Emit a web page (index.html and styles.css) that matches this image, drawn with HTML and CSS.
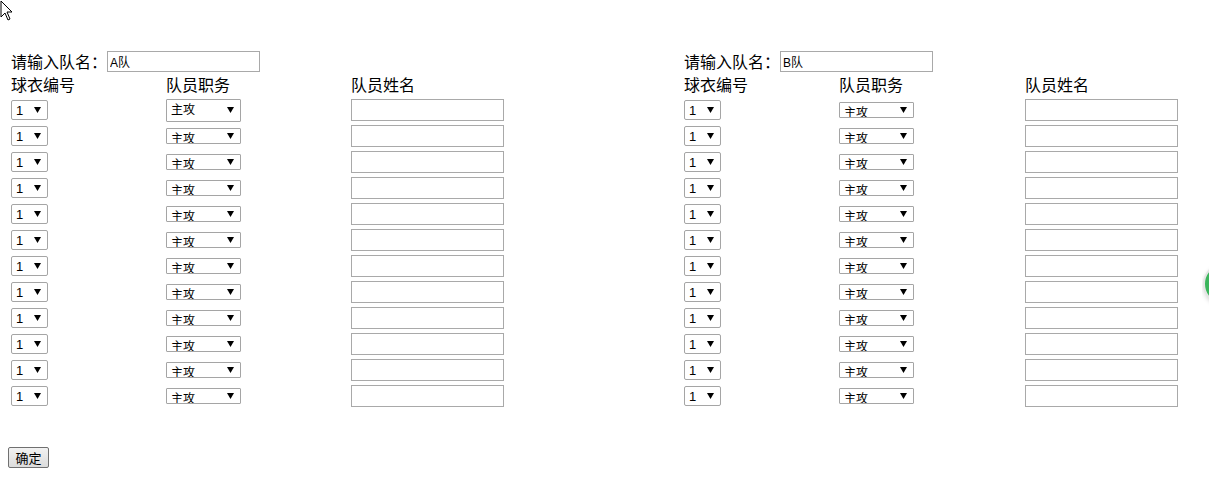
FILE: index.html
```html
<!DOCTYPE html>
<html lang="zh">
<head>
  <meta charset="UTF-8">
  <title>队员登记</title>
  <link rel="stylesheet" href="styles.css">
</head>
<body>
  <svg class="cursor" width="14" height="22" viewBox="0 0 14 22">
    <path d="M1 1 L1 17 L5 13 L8 20 L10 19 L7 12 L12 12 Z" fill="#fff" stroke="#000" stroke-width="1"/>
  </svg>
  <form id="teams">
    <div class="team" data-team="A">
      <div class="teamname">请输入队名：<input type="text" class="tname" value="A队"></div>
      <div class="row head"><span>球衣编号</span><span>队员职务</span><span>队员姓名</span></div>
      <div class="rows"></div>
    </div>
    <div class="team" data-team="B">
      <div class="teamname">请输入队名：<input type="text" class="tname" value="B队"></div>
      <div class="row head"><span>球衣编号</span><span>队员职务</span><span>队员姓名</span></div>
      <div class="rows"></div>
    </div>
  </form>
  <button type="button" class="ok">确定</button>
  <div class="float-ball"><div></div></div>
  <script>
    // 每队12个队员
    document.querySelectorAll(".team .rows").forEach(box => {
      for (let i = 0; i < 12; i++) {
        let r = document.createElement("div");
        r.className = "row";
        r.innerHTML =
          '<span><select class="num"><option>1</option><option>2</option><option>3</option></select></span>' +
          '<span><select class="pos' + (i == 0 && box.parentNode.dataset.team == "A" ? ' first' : '') + '"><option>主攻</option><option>副攻</option><option>二传</option><option>接应</option><option>自由人</option></select></span>' +
          '<span><input type="text" class="pname"></span>';
        box.appendChild(r);
      }
    });
  </script>
</body>
</html>
```

FILE: styles.css
```css
body { margin: 0; font-family: "Noto Sans CJK SC", "Liberation Sans", sans-serif; font-size: 16px; color: #000; background: #fff; overflow: hidden; }
.cursor { position: absolute; left: 0; top: 0; }
#teams { display: flex; gap: 179px; padding: 50px 0 0 11px; }
.team { width: 494px; flex-shrink: 0; }
.team + .team .row { grid-template-columns: 155px 186px 153px; }
.teamname { display: flex; align-items: center; height: 22px; line-height: 22px; }
.tname { width: 153px; height: 21px; box-sizing: border-box; margin: 0; border: 1px solid #a9a9a9; padding: 0 2px; font-size: 12px; font-family: "Liberation Sans", "Noto Sans CJK SC", sans-serif; }
.row { display: grid; grid-template-columns: 155px 185px 153px; height: 26px; align-items: center; }
.row.head { height: 25px; line-height: 25px; }
.row > span { display: flex; align-items: center; }
select { appearance: none; -webkit-appearance: none; box-sizing: border-box; height: 20px; border: 1px solid #a5a5a5; border-radius: 2px; background: #fff url("data:image/svg+xml,%3Csvg xmlns='http://www.w3.org/2000/svg' width='7' height='6'%3E%3Cpath d='M0 0H7L3.5 6Z' fill='%23000'/%3E%3C/svg%3E") no-repeat right 6px center; font-size: 12px; color: #000; padding: 0 0 0 4px; margin: 0; font-family: "Liberation Sans", "Noto Sans CJK SC", sans-serif; }
.num { width: 37px; font-size: 13px; }
.pos { width: 75px; height: 16px; border-radius: 1px; line-height: 14px; padding-top: 3px; }
.pos.first { height: 23px; padding-top: 0; }
.pname { width: 153px; height: 22px; box-sizing: border-box; border: 1px solid #a9a9a9; margin: 0; padding: 0 2px; }
.ok { margin: 38px 0 0 8px; width: 41px; height: 21px; padding: 0; border: 1px solid #707070; border-radius: 2px; background: linear-gradient(#f2f2f2, #dcdcdc); font-size: 13px; font-family: "Noto Sans CJK SC", sans-serif; }
.float-ball { position: absolute; left: 1202px; top: 261px; width: 7px; height: 46px; overflow: hidden; }
.float-ball div { width: 38px; height: 38px; margin: 2px 0 0 1px; border-radius: 50%; background: #3bb55c; border: 2px solid #e4e4e4; box-shadow: 0 2px 4px rgba(0,0,0,.15); }
```
